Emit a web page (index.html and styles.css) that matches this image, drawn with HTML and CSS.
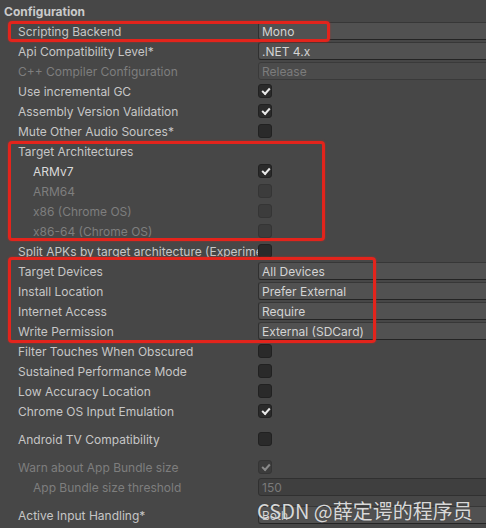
FILE: index.html
```html
<!DOCTYPE html>
<html>
<head>
<meta charset="utf-8">
<link rel="stylesheet" href="styles.css">
</head>
<body>
<div class="panel">
  <div class="header">Configuration</div>

  <div class="row"><div class="label">Scripting Backend</div><div class="value"><div class="dropdown">Mono</div></div></div>
  <div class="row"><div class="label">Api Compatibility Level*</div><div class="value"><div class="dropdown">.NET 4.x</div></div></div>
  <div class="row disabled"><div class="label">C++ Compiler Configuration</div><div class="value"><div class="dropdown">Release</div></div></div>
  <div class="row"><div class="label">Use incremental GC</div><div class="value"><span class="check on"></span></div></div>
  <div class="row"><div class="label">Assembly Version Validation</div><div class="value"><span class="check on"></span></div></div>
  <div class="row"><div class="label">Mute Other Audio Sources*</div><div class="value"><span class="check"></span></div></div>
  <div class="row"><div class="label">Target Architectures</div><div class="value"></div></div>
  <div class="row"><div class="label indent bright">ARMv7</div><div class="value"><span class="check on"></span></div></div>
  <div class="row disabled"><div class="label indent">ARM64</div><div class="value"><span class="check"></span></div></div>
  <div class="row disabled"><div class="label indent">x86 (Chrome OS)</div><div class="value"><span class="check"></span></div></div>
  <div class="row disabled"><div class="label indent">x86-64 (Chrome OS)</div><div class="value"><span class="check"></span></div></div>
  <div class="row"><div class="label">Split APKs by target architecture (Experimental)</div><div class="value"><span class="check"></span></div></div>
  <div class="row"><div class="label">Target Devices</div><div class="value"><div class="dropdown">All Devices</div></div></div>
  <div class="row"><div class="label">Install Location</div><div class="value"><div class="dropdown">Prefer External</div></div></div>
  <div class="row"><div class="label">Internet Access</div><div class="value"><div class="dropdown">Require</div></div></div>
  <div class="row"><div class="label">Write Permission</div><div class="value"><div class="dropdown">External (SDCard)</div></div></div>
  <div class="row"><div class="label">Filter Touches When Obscured</div><div class="value"><span class="check"></span></div></div>
  <div class="row"><div class="label">Sustained Performance Mode</div><div class="value"><span class="check"></span></div></div>
  <div class="row"><div class="label">Low Accuracy Location</div><div class="value"><span class="check"></span></div></div>
  <div class="row"><div class="label">Chrome OS Input Emulation</div><div class="value"><span class="check on"></span></div></div>
  <div class="spacer"></div>
  <div class="row"><div class="label">Android TV Compatibility</div><div class="value"><span class="check"></span></div></div>
  <div class="spacer"></div>
  <div class="row disabled"><div class="label">Warn about App Bundle size</div><div class="value"><span class="check on"></span></div></div>
  <div class="row disabled"><div class="label indent">App Bundle size threshold</div><div class="value"><div class="textfield">150</div></div></div>
  <div class="spacer"></div>
  <div class="row"><div class="label">Active Input Handling*</div><div class="value"><div class="dropdown">Both</div></div></div>

  <div class="mark mark-1"></div>
  <div class="mark mark-2"></div>
  <div class="mark mark-3"></div>
  <div class="watermark">CSDN @薛定谔的程序员</div>
</div>
</body>
</html>
```
FILE: styles.css
```css
html, body {
  margin: 0;
  padding: 0;
  background: #474747;
  overflow: hidden;
}
.panel {
  position: relative;
  width: 486px;
  height: 528px;
  padding-top: 1px;
  box-sizing: border-box;
  font-family: Inter, "Noto Sans", "DejaVu Sans", sans-serif;
  font-size: 12px;
  color: #c6c6c6;
}
.header {
  box-sizing: border-box;
  height: 20px;
  padding-top: 2px;
  line-height: 18px;
  padding-left: 4px;
  font-weight: bold;
  color: #cacaca;
}
.row {
  display: flex;
  height: 20px;
  align-items: center;
}
.label {
  box-sizing: border-box;
  width: 258px;
  flex: 0 0 258px;
  height: 20px;
  padding-left: 18px;
  padding-top: 1px;
  white-space: nowrap;
  overflow: hidden;
  line-height: 19px;
}
.label.indent { padding-left: 33px; }
.label.bright { color: #dadada; }
.disabled .label { color: #7e7e7e; }
.value {
  flex: 1;
  display: flex;
  align-items: center;
  height: 20px;
}
.dropdown, .textfield {
  box-sizing: border-box;
  height: 18px;
  width: 240px;
  margin-right: -12px;
  background: #515151;
  border: 1px solid #303030;
  border-bottom-color: #242424;
  border-top-color: #373737;
  border-radius: 3px 0 0 3px;
  padding-left: 3px;
  padding-top: 1px;
  line-height: 15px;
  color: #d4d4d4;
  white-space: nowrap;
}
.disabled .dropdown {
  background: #4b4b4b;
  border-color: #3a3a3a;
  color: #7c7c7c;
}
.textfield {
  background: #3f3f3f;
  border-color: #303030;
  color: #7a7a7a;
}
.check {
  box-sizing: border-box;
  display: inline-block;
  width: 14px;
  height: 14px;
  background: #2a2a2a;
  border: 1px solid #212121;
  border-radius: 3px;
  position: relative;
}
.check.on::after {
  content: "";
  position: absolute;
  left: 3px;
  top: 3px;
  width: 6px;
  height: 3px;
  border-left: 2px solid #e8e8e8;
  border-bottom: 2px solid #e8e8e8;
  transform: rotate(-48deg);
}
.disabled .check {
  background: #3c3c3c;
  border-color: #353535;
}
.disabled .check.on::after {
  border-color: #8a8a8a;
}
.spacer { height: 8px; }

.mark {
  position: absolute;
  border: 3px solid #e3241c;
  border-radius: 4px;
  box-shadow: 0 0 2px rgba(230, 40, 30, 0.6);
  box-sizing: border-box;
}
.mark-1 { left: 8px; top: 21px; width: 322px; height: 21px; }
.mark-2 { left: 8px; top: 141px; width: 317px; height: 100px; }
.mark-3 { left: 8px; top: 257px; width: 368px; height: 86px; }

.watermark {
  position: absolute;
  left: 257px;
  top: 496px;
  font-family: "Noto Sans CJK SC", "Noto Sans", sans-serif;
  font-size: 20px;
  color: rgba(240, 240, 240, 0.88);
  text-shadow: 0 0 1px #333;
  white-space: nowrap;
}
```
